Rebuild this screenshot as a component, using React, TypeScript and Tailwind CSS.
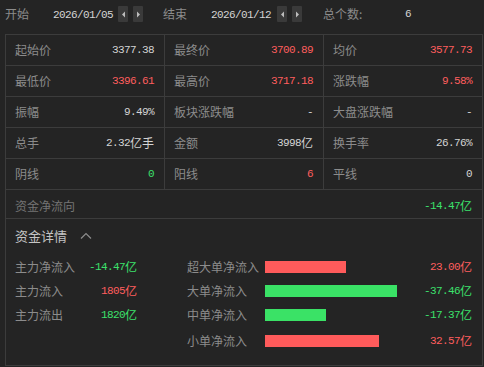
import React from "react";

const CJK = '"Noto Sans CJK SC", "Noto Sans", sans-serif';
const MONO = '"Liberation Mono", "DejaVu Sans Mono", monospace';

type Tone = "w" | "r" | "g";
const toneCls: Record<Tone, string> = {
  w: "text-[#d4d4d4]",
  r: "text-[#ff5e5e]",
  g: "text-[#3ce26c]",
};

function Val({ num, unit, tone = "w" }: { num: string; unit?: string; tone?: Tone }) {
  return (
    <span className={`inline-flex items-center whitespace-nowrap ${toneCls[tone]}`}>
      <span className="text-[11px] tracking-[-0.6px]" style={{ fontFamily: MONO }}>
        {num}
      </span>
      {unit && (
        <span className="text-[12px] leading-none" style={{ fontFamily: CJK }}>
          {unit}
        </span>
      )}
    </span>
  );
}

function Arrow({ dir }: { dir: "l" | "r" }) {
  return (
    <div className="w-[10px] h-[16px] bg-[#3a3a3a] rounded-[1px] flex items-center justify-center">
      <svg width="5" height="7" viewBox="0 0 5 7">
        {dir === "l" ? (
          <path d="M4 0.5 L1 3.5 L4 6.5 Z" fill="#bdbdbd" />
        ) : (
          <path d="M1 0.5 L4 3.5 L1 6.5 Z" fill="#bdbdbd" />
        )}
      </svg>
    </div>
  );
}

type Cell = { label: string; num: string; unit?: string; tone?: Tone };

const rows: Cell[][] = [
  [
    { label: "起始价", num: "3377.38" },
    { label: "最终价", num: "3700.89", tone: "r" },
    { label: "均价", num: "3577.73", tone: "r" },
  ],
  [
    { label: "最低价", num: "3396.61", tone: "r" },
    { label: "最高价", num: "3717.18", tone: "r" },
    { label: "涨跌幅", num: "9.58%", tone: "r" },
  ],
  [
    { label: "振幅", num: "9.49%" },
    { label: "板块涨跌幅", num: "-" },
    { label: "大盘涨跌幅", num: "-" },
  ],
  [
    { label: "总手", num: "2.32", unit: "亿手" },
    { label: "金额", num: "3998", unit: "亿" },
    { label: "换手率", num: "26.76%" },
  ],
  [
    { label: "阴线", num: "0", tone: "g" },
    { label: "阳线", num: "6", tone: "r" },
    { label: "平线", num: "0" },
  ],
];

const leftFlows: Cell[] = [
  { label: "主力净流入", num: "-14.47", unit: "亿", tone: "g" },
  { label: "主力流入", num: "1805", unit: "亿", tone: "r" },
  { label: "主力流出", num: "1820", unit: "亿", tone: "g" },
];

const rightFlows: (Cell & { bar: number })[] = [
  { label: "超大单净流入", num: "23.00", unit: "亿", tone: "r", bar: 81 },
  { label: "大单净流入", num: "-37.46", unit: "亿", tone: "g", bar: 132 },
  { label: "中单净流入", num: "-17.37", unit: "亿", tone: "g", bar: 61 },
  { label: "小单净流入", num: "32.57", unit: "亿", tone: "r", bar: 114 },
];

export default function App() {
  return (
    <div
      className="w-[484px] h-[367px] bg-[#242424] text-[12px] text-[#8c8c8c] overflow-hidden"
      style={{ fontFamily: CJK }}
    >
      {/* header */}
      <div className="h-[28px] flex items-center pl-[5px]">
        <span className="w-[48px]">开始</span>
        <span className="w-[65px]"><Val num="2026/01/05" /></span>
        <Arrow dir="l" />
        <span className="w-[5px]" />
        <Arrow dir="r" />
        <span className="w-[20px]" />
        <span className="w-[48px]">结束</span>
        <span className="w-[66px]"><Val num="2026/01/12" /></span>
        <Arrow dir="l" />
        <span className="w-[5px]" />
        <Arrow dir="r" />
        <span className="w-[21px]" />
        <span className="w-[82px]">总个数:</span>
        <Val num="6" />
      </div>

      {/* table */}
      <div className="ml-[5px] mt-[6px] w-[478px] h-[332px] border border-[#3c3c3c] flex flex-col">
        {rows.map((row, i) => (
          <div key={i} className="h-[31px] border-b border-[#3c3c3c] grid grid-cols-[159px_159px_158px]">
            {row.map((c, j) => (
              <div
                key={j}
                className={`flex items-center justify-between pl-[9px] pr-[10px] ${j < 2 ? "border-r border-[#3c3c3c]" : ""}`}
              >
                <span>{c.label}</span>
                <Val num={c.num} unit={c.unit} tone={c.tone} />
              </div>
            ))}
          </div>
        ))}
        <div className="h-[29px] border-b border-[#3c3c3c] flex items-center justify-between pl-[9px] pr-[10px] pt-[4px]">
          <span className="text-[#747474]">资金净流向</span>
          <Val num="-14.47" unit="亿" tone="g" />
        </div>

        {/* details */}
        <div className="flex-1 pl-[9px] pr-[9px]">
          <div className="h-[34px] flex items-center">
            <span className="text-[13px] text-[#c4c4c4]">资金详情</span>
            <svg className="ml-[13px]" width="12" height="8" viewBox="0 0 12 8">
              <path d="M1 6.5 L6 1.5 L11 6.5" fill="none" stroke="#8c8c8c" strokeWidth="1.2" />
            </svg>
          </div>
          <div className="flex pt-[2px]">
            <div className="w-[122px] flex flex-col">
              {leftFlows.map((c, i) => (
                <div key={i} className="h-[24px] flex items-center justify-between">
                  <span>{c.label}</span>
                  <Val num={c.num} unit={c.unit} tone={c.tone} />
                </div>
              ))}
            </div>
            <div className="ml-[50px] w-[285px] flex flex-col">
              {rightFlows.map((c, i) => (
                <div key={i} className={`h-[24px] flex items-center ${i === 3 ? "mt-[2px]" : ""}`}>
                  <span className="w-[78px]">{c.label}</span>
                  <div className="flex-1">
                    <div
                      className={`h-[12px] ${c.tone === "r" ? "bg-[#ff5b5b]" : "bg-[#3ae266]"}`}
                      style={{ width: c.bar }}
                    />
                  </div>
                  <Val num={c.num} unit={c.unit} tone={c.tone} />
                </div>
              ))}
            </div>
          </div>
        </div>
      </div>
    </div>
  );
}
